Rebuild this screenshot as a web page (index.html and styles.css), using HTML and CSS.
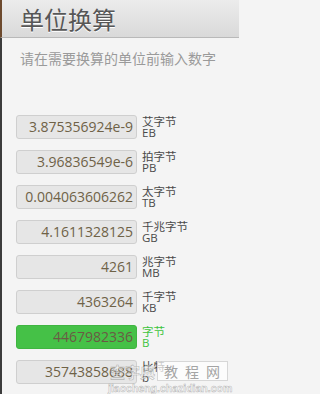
FILE: index.html
```html
<!DOCTYPE html>
<html lang="zh">
<head>
<meta charset="utf-8">
<link rel="stylesheet" href="styles.css">
</head>
<body>
<div class="app">
  <header class="bar"><h1 class="title">单位换算</h1></header>
  <main class="content">
    <p class="hint">请在需要换算的单位前输入数字</p>
    <div class="list">
      <div class="row"><div class="field">3.875356924e-9</div><div class="unit"><span class="cn">艾字节</span><span class="en">EB</span></div></div>
      <div class="row"><div class="field">3.96836549e-6</div><div class="unit"><span class="cn">拍字节</span><span class="en">PB</span></div></div>
      <div class="row"><div class="field">0.004063606262</div><div class="unit"><span class="cn">太字节</span><span class="en">TB</span></div></div>
      <div class="row"><div class="field">4.1611328125</div><div class="unit"><span class="cn">千兆字节</span><span class="en">GB</span></div></div>
      <div class="row"><div class="field">4261</div><div class="unit"><span class="cn">兆字节</span><span class="en">MB</span></div></div>
      <div class="row"><div class="field">4363264</div><div class="unit"><span class="cn">千字节</span><span class="en">KB</span></div></div>
      <div class="row active"><div class="field">4467982336</div><div class="unit"><span class="cn">字节</span><span class="en">B</span></div></div>
      <div class="row"><div class="field">35743858688</div><div class="unit"><span class="cn">比特</span><span class="en">b</span></div></div>
    </div>
  </main>
  <div class="watermark">
    <div class="wm-top"><span class="wm-brand">查字典</span><span class="wm-box">教程网</span></div>
    <div class="wm-url">jiaocheng.chazidian.com</div>
  </div>
</div>
</body>
</html>
```
FILE: styles.css
```css
html, body {
  margin: 0;
  padding: 0;
  background: #f4f4f4;
  font-family: "Noto Sans CJK SC", "Open Sans", sans-serif;
}
.app {
  position: relative;
  width: 239px;
  height: 394px;
  overflow: hidden;
  background: #f4f4f4;
}
.bar {
  height: 37px;
  border-left: 2px solid #6d4a2e;
  border-bottom: 1px solid #b9b9b9;
  background: linear-gradient(#ececec, #d9d9d9);
  display: flex;
  align-items: center;
  padding-left: 18px;
}
.title {
  margin: 0;
  font-family: "Noto Sans CJK SC", sans-serif;
  font-weight: normal;
  font-size: 24px;
  line-height: 28px;
  color: #575757;
  text-shadow: 0 1px 0 #ffffff;
}
.content {
  border-left: 2px solid #3c3c3c;
  height: 356px;
  padding: 11px 0 0 18px;
  box-sizing: border-box;
}
.hint {
  margin: 0;
  font-size: 14px;
  line-height: 18px;
  color: #9a9a9a;
  white-space: nowrap;
}
.list {
  margin-top: 48px;
  margin-left: -4px;
  display: flex;
  flex-direction: column;
  gap: 11px;
}
.row {
  display: flex;
  align-items: flex-start;
  gap: 5px;
}
.field {
  width: 121px;
  height: 24px;
  box-sizing: border-box;
  border: 1px solid #cfcfcf;
  border-radius: 3px;
  background: #e6e6e6;
  text-align: right;
  padding-right: 3px;
  font-family: "Open Sans", sans-serif;
  font-size: 14px;
  line-height: 22px;
  color: #6f6247;
  white-space: nowrap;
  overflow: hidden;
}
.unit {
  display: flex;
  flex-direction: column;
  color: #4a4a4a;
  white-space: nowrap;
}
.cn {
  font-size: 11.5px;
  line-height: 13px;
}
.en {
  font-family: "Open Sans", sans-serif;
  font-size: 11.5px;
  line-height: 10px;
}
.row.active .field {
  background: #45c147;
  border-color: #3fb541;
  color: #6a5a44;
}
.row.active .unit {
  color: #3ec43e;
}
.watermark {
  position: absolute;
  left: 108px;
  top: 361px;
  font-family: "Noto Sans CJK SC", sans-serif;
}
.wm-top {
  display: flex;
  align-items: center;
  gap: 2px;
}
.wm-brand {
  font-size: 15px;
  line-height: 19px;
  font-weight: bold;
  color: rgba(255,255,255,0.5);
  -webkit-text-stroke: 0.6px rgba(120,120,120,0.5);
  padding-left: 2px;
}
.wm-box {
  font-size: 14px;
  line-height: 18px;
  letter-spacing: 7px;
  color: #a4a4a4;
  background: rgba(255,255,255,0.7);
  border: 1px solid rgba(205,205,205,0.8);
  padding: 0 0 0 6px;
}
.wm-url {
  font-family: "Liberation Sans", sans-serif;
  font-size: 10.5px;
  line-height: 11px;
  font-weight: bold;
  color: rgba(255,255,255,0.9);
  -webkit-text-stroke: 0.5px rgba(150,150,150,0.7);
  margin-top: 2px;
}
```
